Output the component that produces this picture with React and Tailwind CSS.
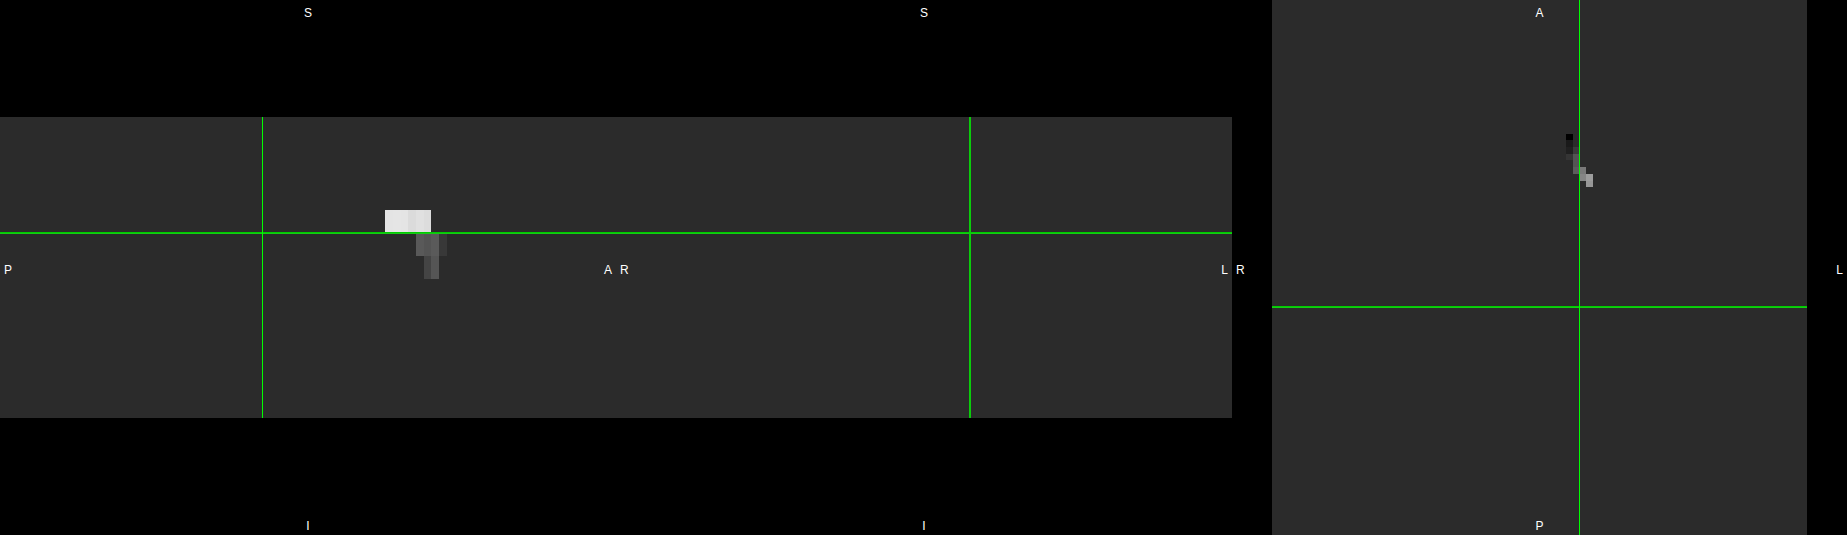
const sagittalVoxels = [
  [385, 93, 8, 23, '#e4e4e4'],
  [393, 93, 8, 23, '#e5e5e5'],
  [401, 93, 7, 23, '#e4e4e4'],
  [408, 93, 8, 23, '#dbdbdb'],
  [416, 93, 8, 23, '#e0e0e0'],
  [424, 93, 7, 23, '#dcdcdc'],
  [416, 116, 8, 23, '#595959'],
  [424, 116, 7, 23, '#545454'],
  [431, 116, 8, 23, '#5a5a5a'],
  [439, 116, 8, 23, '#383838'],
  [424, 139, 7, 23, '#444444'],
  [431, 139, 8, 23, '#555555'],
];

const axialVoxels = [
  [294, 134, 7, 6, '#000000'],
  [294, 140, 7, 7, '#1a1a1a'],
  [294, 147, 7, 7, '#202020'],
  [294, 154, 7, 6, '#353535'],
  [301, 147, 6, 7, '#3b3b3b'],
  [301, 154, 6, 13, '#545454'],
  [301, 167, 6, 7, '#5c5c5c'],
  [307, 167, 7, 7, '#7a7a7a'],
  [307, 174, 7, 7, '#858585'],
  [314, 174, 7, 7, '#9d9d9d'],
  [314, 181, 7, 6, '#979797'],
];

function Slice({ width, height, voxels = [], vx, vw, hy }) {
  return (
    <svg width={width} height={height} shapeRendering="crispEdges" className="block bg-[#2b2b2b]">
      {voxels.map(([x, y, w, h, fill]) => (
        <rect key={`${x}-${y}`} x={x} y={y} width={w} height={h} fill={fill} />
      ))}
      <rect x="0" y={hy} width={width} height="1" fill="#00cc00" />
      <rect x="0" y={hy + 1} width={width} height="1" fill="#14cc14" />
      <rect x={vx} y="0" width={vw} height={height} fill={vw === 1 ? '#00ff00' : '#0acc0a'} />
    </svg>
  );
}

function Viewport({ className, top, bottom, left, right, children }) {
  return (
    <section className={`relative flex h-full shrink-0 items-center ${className}`}>
      {children}
      <span className="absolute inset-x-0 top-[6px] text-center">{top}</span>
      <span className="absolute inset-x-0 bottom-[2px] text-center">{bottom}</span>
      <span className="absolute left-[4px] top-[263px]">{left}</span>
      <span className="absolute right-[4px] top-[263px]">{right}</span>
    </section>
  );
}

export default function App() {
  return (
    <main className="flex h-[535px] w-[1847px] overflow-hidden bg-black font-['Liberation_Sans',Arial,sans-serif] text-[12px] leading-[14px] text-white">
      <Viewport className="w-[616px]" top="S" bottom="I" left="P" right="A">
        <Slice width={616} height={301} voxels={sagittalVoxels} vx={262} vw={1} hy={115} />
      </Viewport>
      <Viewport className="w-[616px]" top="S" bottom="I" left="R" right="L">
        <Slice width={616} height={301} vx={353} vw={2} hy={115} />
      </Viewport>
      <Viewport className="w-[615px] justify-center" top="A" bottom="P" left="R" right="L">
        <Slice width={535} height={535} voxels={axialVoxels} vx={307} vw={1} hy={306} />
      </Viewport>
    </main>
  );
}
